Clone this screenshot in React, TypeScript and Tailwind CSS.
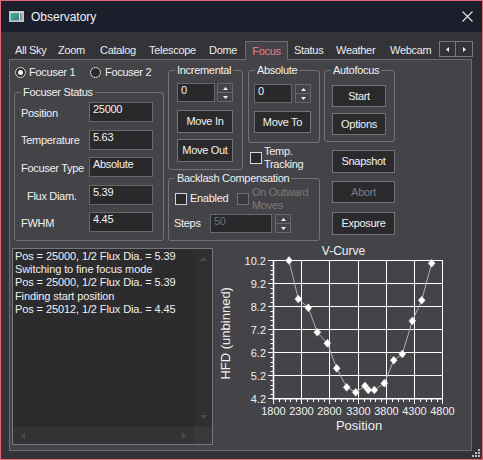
import React from 'react'
import clsx from 'clsx'

const tabs = [
  { label: 'All Sky', w: 'w-[43px]' },
  { label: 'Zoom', w: 'w-[42px]' },
  { label: 'Catalog', w: 'w-[49px]' },
  { label: 'Telescope', w: 'w-[60px]' },
  { label: 'Dome', w: 'w-[42px]' },
  { label: 'Focus', w: 'w-[43px]', active: true },
  { label: 'Status', w: 'w-[42px]' },
  { label: 'Weather', w: 'w-[54px]' },
  { label: 'Webcam', w: 'w-[55px]' },
]

const status = [
  { label: 'Position', value: '25000' },
  { label: 'Temperature', value: '5.63' },
  { label: 'Focuser Type', value: 'Absolute' },
  { label: 'Flux Diam.', value: '5.39', indent: true },
  { label: 'FWHM', value: '4.45' },
]

const log = [
  'Pos = 25000, 1/2 Flux Dia. = 5.39',
  'Switching to fine focus mode',
  'Pos = 25000, 1/2 Flux Dia. = 5.39',
  'Finding start position',
  'Pos = 25012, 1/2 Flux Dia. = 4.45',
]

// page coordinates of the V-curve samples
const points: [number, number][] = [
  [289, 260.5], [298.3, 299], [308.3, 307.7], [317.3, 332.3], [327.3, 343.3],
  [336.7, 368.3], [346.7, 387.3], [355.7, 392.3], [365, 386], [368.3, 390],
  [374.3, 390], [384.3, 383.3], [393.7, 360.3], [402.3, 354], [412.3, 321],
  [421.7, 300.3], [431.7, 263.3],
]
const gridX = [0, 28, 56, 85, 113, 141, 169].map((d) => 273.5 + d)
const gridY = [260.5, 283.5, 306.5, 329.5, 352.5, 375.5, 398.5]
const xLabels = ['1800', '2300', '2800', '3300', '3800', '4300', '4800']
const yLabels = ['10.2', '9.2', '8.2', '7.2', '6.2', '5.2', '4.2']

function Fieldset({ legend, className, children }: { legend: string; className?: string; children?: React.ReactNode }) {
  return (
    <fieldset className={clsx('m-0 p-0 min-w-0 border border-[#727276] rounded-[3px]', className)}>
      <legend className="ml-[6px] px-[2px] leading-[13px]">{legend}</legend>
      {children}
    </fieldset>
  )
}

function Btn({ label, className, disabled }: { label: string; className?: string; disabled?: boolean }) {
  return (
    <button
      className={clsx(
        'flex items-center justify-center border border-[#737377] bg-[#2a2a2d] leading-[13px]',
        disabled ? 'text-[#7c7c80]' : 'text-[#f2f2f2]',
        className
      )}
    >
      {label}
    </button>
  )
}

function TextBox({ value, className, disabled }: { value: string; className?: string; disabled?: boolean }) {
  return (
    <div
      className={clsx(
        'border border-[#68686c] bg-[#29292c] pl-[3px] leading-[13px]',
        disabled ? 'text-[#6e6e72]' : 'text-[#f2f2f2]',
        className
      )}
    >
      {value}
    </div>
  )
}

function Spinner({ className }: { className?: string }) {
  return (
    <div className={clsx('flex flex-col w-[16px] h-[19px] border border-[#68686c]', className)}>
      <div className="flex-1 flex items-center justify-center border-b border-[#68686c]">
        <svg width="5" height="3" viewBox="0 0 5 3"><path d="M2.5 0 L5 3 L0 3 Z" fill="#f0f0f0" /></svg>
      </div>
      <div className="flex-1 flex items-center justify-center">
        <svg width="5" height="3" viewBox="0 0 5 3"><path d="M0 0 L5 0 L2.5 3 Z" fill="#f0f0f0" /></svg>
      </div>
    </div>
  )
}

function Check({ disabled }: { disabled?: boolean }) {
  return (
    <span
      className={clsx(
        'block shrink-0 w-[12px] h-[12px] border',
        disabled ? 'border-[#707074] bg-[#3b3b3e]' : 'border-[#d4d4d4] bg-[#2b2b2e]'
      )}
    />
  )
}

function Radio({ checked }: { checked?: boolean }) {
  return (
    <span className="flex items-center justify-center shrink-0 w-[11px] h-[11px] rounded-full border border-[#d4d4d4] bg-[#2b2b2e]">
      {checked && <span className="block w-[5px] h-[5px] rounded-full bg-[#f4f4f4]" />}
    </span>
  )
}

function TitleBar() {
  return (
    <div className="flex items-center h-[31px] bg-[#1b1f2c] shrink-0">
      <svg className="ml-[8px]" width="15" height="11" viewBox="0 0 15 11">
        <defs>
          <linearGradient id="ic" x1="0" y1="0" x2="1" y2="1">
            <stop offset="0" stopColor="#58b08a" />
            <stop offset="1" stopColor="#2f7c93" />
          </linearGradient>
        </defs>
        <rect x="0.5" y="0.5" width="14" height="10" fill="#dcdcdc" stroke="#bfc4c8" />
        <rect x="1.5" y="2" width="8.5" height="7.5" fill="url(#ic)" />
        <rect x="11" y="2" width="2.5" height="7.5" fill="#8d949a" />
      </svg>
      <span className="ml-[7px] text-[12px] tracking-normal text-[#f2f2f2]">Observatory</span>
      <svg className="ml-auto mr-[9px]" width="11" height="11" viewBox="0 0 11 11">
        <path d="M0.5 0.5 L10.5 10.5 M10.5 0.5 L0.5 10.5" stroke="#e6e6e6" strokeWidth="1.1" />
      </svg>
    </div>
  )
}

function TabStrip() {
  return (
    <div className="flex h-[18px] mt-[9px] ml-[8px] shrink-0 tracking-[-0.3px]">
      {tabs.map((t) =>
        t.active ? (
          <div
            key={t.label}
            className={clsx(
              'relative z-10 h-[19px] flex items-center justify-center pt-px border border-b-0 border-[#6e6e72] bg-[#444448] text-[#ea7d8e]',
              t.w
            )}
          >
            {t.label}
          </div>
        ) : (
          <div key={t.label} className={clsx('flex items-center pl-[6px] pt-px text-[#ececec]', t.w)}>
            {t.label}
          </div>
        )
      )}
      <div className="flex h-[16px] border border-[#7a7a7e]">
        <div className="w-[16px] flex items-center justify-center border-r border-[#7a7a7e]">
          <svg width="3" height="5" viewBox="0 0 3 5"><path d="M3 0 L3 5 L0 2.5 Z" fill="#f0f0f0" /></svg>
        </div>
        <div className="w-[16px] flex items-center justify-center">
          <svg width="3" height="5" viewBox="0 0 3 5"><path d="M0 0 L3 2.5 L0 5 Z" fill="#f0f0f0" /></svg>
        </div>
      </div>
    </div>
  )
}

function FocuserColumn() {
  return (
    <div className="ml-[4px] w-[150px] flex flex-col">
      <div className="mt-[5px] h-[15px] flex items-center">
        <div className="w-[76px] flex items-center pl-[1px]">
          <Radio checked />
          <span className="ml-[3px]">Focuser 1</span>
        </div>
        <div className="flex items-center">
          <Radio />
          <span className="ml-[4px]">Focuser 2</span>
        </div>
      </div>
      <Fieldset legend="Focuser Status" className="mt-[6px] h-[155px]">
        <div className="pt-[3px] pl-[6px] flex flex-col gap-[7.6px]">
          {status.map((s) => (
            <div key={s.label} className="flex items-center h-[20px]">
              <span className={clsx('w-[68px] pt-[2px]', s.indent && 'pl-[6px]')}>{s.label}</span>
              <TextBox value={s.value} className="w-[64px] h-[20px]" />
            </div>
          ))}
        </div>
      </Fieldset>
    </div>
  )
}

function MoveColumn() {
  return (
    <div className="ml-[4px] w-[152px] flex flex-col">
      <div className="mt-[4px] flex h-[107px]">
        <Fieldset legend="Incremental" className="w-[75px] h-[106px]">
          <div className="pl-[8px] pt-[6px] flex flex-col">
            <div className="flex">
              <TextBox value="0" className="w-[38px] h-[19px]" />
              <Spinner className="ml-[2px]" />
            </div>
            <Btn label="Move In" className="mt-[8px] w-[56px] h-[23px]" />
            <Btn label="Move Out" className="mt-[6px] w-[56px] h-[23px]" />
          </div>
        </Fieldset>
        <div className="ml-[5px] flex flex-col">
          <Fieldset legend="Absolute" className="w-[72px] h-[79px]">
            <div className="pl-[5px] pt-[7px] flex flex-col">
              <div className="flex">
                <TextBox value="0" className="w-[38px] h-[19px]" />
                <Spinner className="ml-[3px]" />
              </div>
              <Btn label="Move To" className="mt-[8px] w-[57px] h-[22px]" />
            </div>
          </Fieldset>
          <div className="mt-[2px] ml-[2px] flex items-center">
            <Check />
            <span className="ml-[2px] leading-[13px]">
              Temp.
              <br />
              Tracking
            </span>
          </div>
        </div>
      </div>
      <Fieldset legend="Backlash Compensation" className="mt-[1px] h-[69px]">
        <div className="pl-[6px] flex flex-col">
          <div className="h-[27px] flex items-center">
            <div className="w-[62px] flex items-center">
              <Check />
              <span className="ml-[3px]">Enabled</span>
            </div>
            <Check disabled />
            <span className="ml-[3px] leading-[13px] text-[#7a7a7e]">
              On Outward
              <br />
              Moves
            </span>
          </div>
          <div className="mt-[2px] flex items-center">
            <span className="-ml-[1px] w-[36px]">Steps</span>
            <TextBox value="50" disabled className="w-[62px] h-[19px]" />
            <Spinner className="ml-[3px]" />
          </div>
        </div>
      </Fieldset>
    </div>
  )
}

function AutofocusColumn() {
  return (
    <div className="ml-[4px] w-[72px] flex flex-col">
      <Fieldset legend="Autofocus" className="mt-[4px] w-[71px] h-[78px]">
        <div className="pl-[7px] pt-[8px] flex flex-col">
          <Btn label="Start" className="w-[54px] h-[22px]" />
          <Btn label="Options" className="mt-[6px] w-[54px] h-[22px]" />
        </div>
      </Fieldset>
      <div className="ml-[8px] flex flex-col">
        <Btn label="Snapshot" className="mt-[8px] w-[63px] h-[23px]" />
        <Btn label="Abort" disabled className="mt-[8px] w-[63px] h-[22px]" />
        <Btn label="Exposure" className="mt-[9px] w-[63px] h-[23px]" />
      </div>
    </div>
  )
}

function LogBox() {
  return (
    <div className="ml-[2px] mt-[6px] w-[201px] h-[197px] border border-[#78787c] bg-[#2c2c2f] grid grid-cols-[1fr_18px] grid-rows-[1fr_17px]">
      <div className="pl-[2px] pt-[1px] leading-[13.2px] tracking-[-0.1px] whitespace-nowrap overflow-hidden text-[#f0f0f0]">
        {log.map((l, i) => (
          <div key={i}>{l}</div>
        ))}
      </div>
      <div className="bg-[#2f2f32] flex flex-col items-center justify-between py-[8px]">
        <svg width="7" height="4" viewBox="0 0 7 4"><path d="M3.5 0 L7 4 L0 4 Z" fill="#4a4a4e" /></svg>
        <svg width="7" height="4" viewBox="0 0 7 4"><path d="M0 0 L7 0 L3.5 4 Z" fill="#4a4a4e" /></svg>
      </div>
      <div className="bg-[#333336] flex items-center justify-between px-[8px]">
        <svg width="4" height="7" viewBox="0 0 4 7"><path d="M4 0 L4 7 L0 3.5 Z" fill="#4a4a4e" /></svg>
        <svg width="4" height="7" viewBox="0 0 4 7"><path d="M0 0 L4 3.5 L0 7 Z" fill="#4a4a4e" /></svg>
      </div>
      <div className="bg-[#39393c]" />
    </div>
  )
}

function VCurve() {
  const minorX: number[] = []
  gridX.slice(0, -1).forEach((x, i) => {
    const step = (gridX[i + 1] - x) / 5
    for (let k = 1; k < 5; k++) minorX.push(Math.round(x + step * k) + 0.5)
  })
  const minorY: number[] = []
  gridY.slice(0, -1).forEach((y, i) => {
    const step = (gridY[i + 1] - y) / 5
    for (let k = 1; k < 5; k++) minorY.push(Math.round(y + step * k) + 0.5)
  })
  const line = points.map(([x, y]) => `${x},${y}`).join(' ')

  return (
    <svg className="block shrink-0 tracking-normal" width="257" height="204" viewBox="213 242 257 204">
      <text x="343.5" y="254.5" fontSize="12" fill="#f0f0f0" textAnchor="middle">V-Curve</text>
      {gridX.map((x) => (
        <line key={'gx' + x} x1={x} y1={260} x2={x} y2={398.5} stroke="#ffffff" strokeWidth="1" />
      ))}
      {gridY.map((y) => (
        <line key={'gy' + y} x1={273.5} y1={y} x2={442.5} y2={y} stroke="#ffffff" strokeWidth="1" />
      ))}
      <line x1={273.5} y1={260} x2={273.5} y2={399.5} stroke="#ffffff" strokeWidth="1.6" />
      <line x1={272.5} y1={398.8} x2={443} y2={398.8} stroke="#ffffff" strokeWidth="1.6" />
      {gridX.map((x) => (
        <line key={'tx' + x} x1={x} y1={399} x2={x} y2={404} stroke="#ffffff" strokeWidth="1" />
      ))}
      {minorX.map((x) => (
        <line key={'mx' + x} x1={x} y1={399} x2={x} y2={402} stroke="#ffffff" strokeWidth="1" />
      ))}
      {gridY.map((y) => (
        <line key={'ty' + y} x1={268} y1={y} x2={273} y2={y} stroke="#ffffff" strokeWidth="1" />
      ))}
      {minorY.map((y) => (
        <line key={'my' + y} x1={270.5} y1={y} x2={273} y2={y} stroke="#ffffff" strokeWidth="1" />
      ))}
      {yLabels.map((l, i) => (
        <text key={l} x="266" y={gridY[i] + 4} fontSize="11" fill="#f0f0f0" textAnchor="end">{l}</text>
      ))}
      {xLabels.map((l, i) => (
        <text key={l} x={gridX[i]} y="415" fontSize="11" fill="#f0f0f0" textAnchor="middle">{l}</text>
      ))}
      <text x="359" y="429.5" fontSize="13" fill="#f0f0f0" textAnchor="middle">Position</text>
      <text x="230.5" y="333.3" fontSize="13" fill="#f0f0f0" textAnchor="middle" transform="rotate(-90 230.5 333.3)">
        HFD (unbinned)
      </text>
      <polyline points={line} fill="none" stroke="#b0b0b0" strokeWidth="1" />
      {points.map(([x, y], i) => (
        <path
          key={i}
          d={`M${x} ${y - 4} L${x + 3.5} ${y} L${x} ${y + 4} L${x - 3.5} ${y} Z`}
          fill="#ffffff"
          stroke="#d8d8d8"
          strokeWidth="0.5"
        />
      ))}
    </svg>
  )
}

export default function App() {
  return (
    <div className="w-[483px] h-[460px] p-px bg-[#e4677a] overflow-hidden font-['Liberation_Sans',Arial,sans-serif] text-[11px] tracking-[-0.3px] text-[#f0f0f0]">
      <div className="relative flex flex-col h-full bg-[#343438]">
        <TitleBar />
        <TabStrip />

        {/* tab page */}
        <div className="ml-[8px] w-[463px] h-[392px] shrink-0 border border-[#6b6b70] bg-[#444448] flex flex-col">
          <div className="flex h-[182px] shrink-0">
            <FocuserColumn />
            <MoveColumn />
            <AutofocusColumn />
          </div>
          <div className="flex items-start">
            <LogBox />
            <VCurve />
          </div>
        </div>

        {/* size grip */}
        <svg className="absolute right-[2px] bottom-[2px]" width="8" height="8" viewBox="0 0 8 8">
          <rect x="6" y="0" width="2" height="2" fill="#bdbdbd" />
          <rect x="3" y="3" width="2" height="2" fill="#bdbdbd" />
          <rect x="6" y="3" width="2" height="2" fill="#bdbdbd" />
          <rect x="0" y="6" width="2" height="2" fill="#bdbdbd" />
          <rect x="3" y="6" width="2" height="2" fill="#bdbdbd" />
          <rect x="6" y="6" width="2" height="2" fill="#bdbdbd" />
        </svg>
      </div>
    </div>
  )
}
